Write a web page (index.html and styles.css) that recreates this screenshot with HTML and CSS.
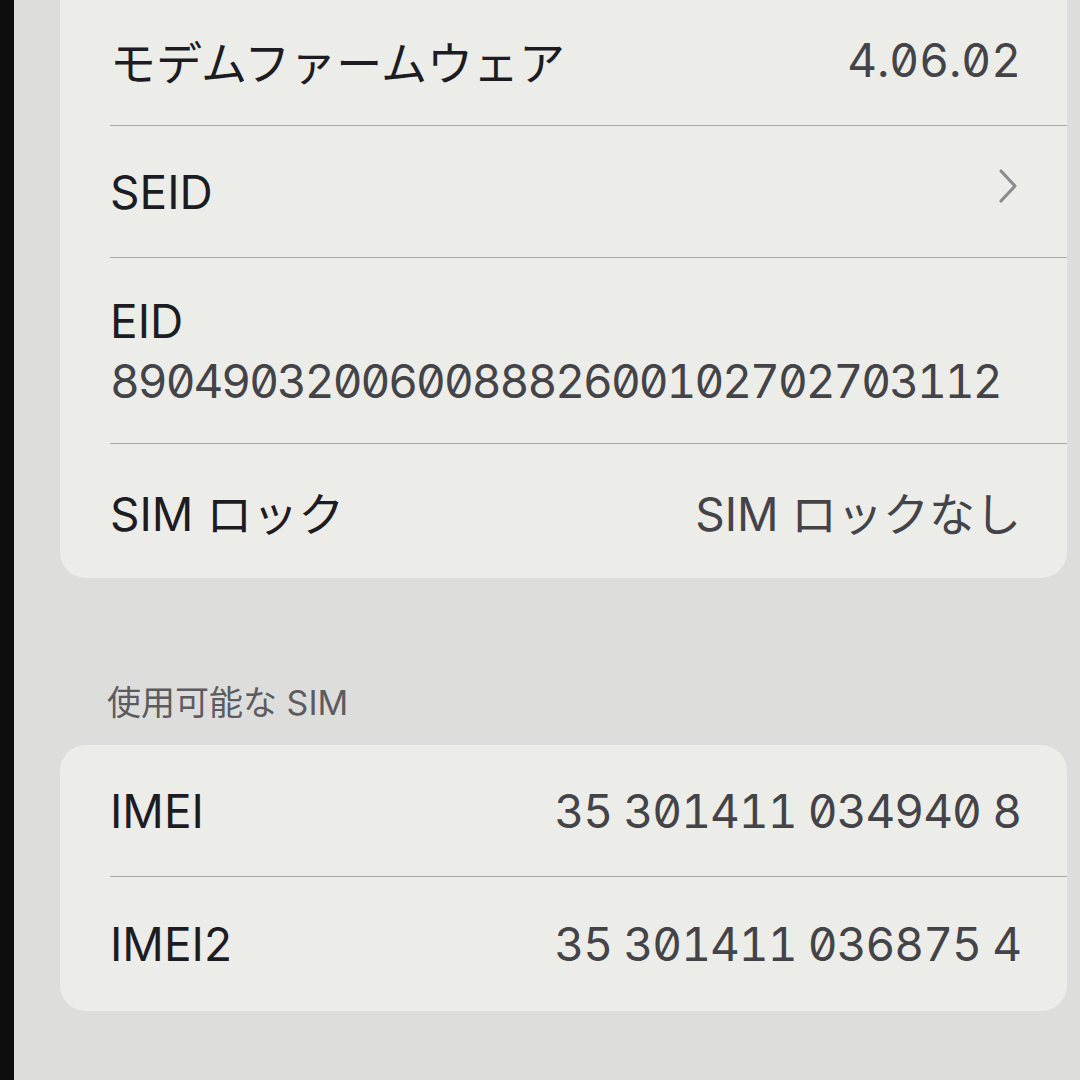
FILE: index.html
```html
<!DOCTYPE html>
<html lang="ja">
<head>
  <meta charset="UTF-8">
  <link rel="stylesheet" href="styles.css">
</head>
<body>

<div class="bezel"></div>

<div class="screen">

  <!-- キャリア情報 -->
  <div class="card card-cut">
    <div class="row">
      <span class="label">モデムファームウェア</span>
      <span class="value">4.06.02</span>
    </div>
    <div class="row">
      <span class="label">SEID</span>
      <svg class="chevron" width="22" height="36" viewBox="0 0 22 36">
        <path d="M4 3 L18 18 L4 33" fill="none" stroke="currentColor" stroke-width="3.2" stroke-linecap="round" stroke-linejoin="round"/>
      </svg>
    </div>
    <div class="row row-stack">
      <span class="label">EID</span>
      <span class="value eid">89049032006008882600102702703112</span>
    </div>
    <div class="row">
      <span class="label">SIM ロック</span>
      <span class="value">SIM ロックなし</span>
    </div>
  </div>

  <div class="section-title">使用可能な SIM</div>

  <div class="card">
    <div class="row">
      <span class="label">IMEI</span>
      <span class="value imei">35 301411 034940 8</span>
    </div>
    <div class="row">
      <span class="label">IMEI2</span>
      <span class="value imei">35 301411 036875 4</span>
    </div>
  </div>

</div>

</body>
</html>
```

FILE: styles.css
```css
body {
  margin: 0;
  height: 1080px;
  overflow: hidden;
  display: flex;
  background-color: #dddedc;
  font-family: Inter, "Noto Sans CJK JP", sans-serif;
}

.bezel {
  flex-shrink: 0;
  width: 14px;
  background-color: #0e0e0e;
}

.screen {
  flex: 1;
  min-width: 0;
  padding: 0 13px 0 46px;
}

.card {
  background-color: #ecece9;
  border-radius: 26px;
  overflow: hidden;
}

/* 上のカードは画面外から続いている */
.card-cut {
  margin-top: -6px;
  border-top-left-radius: 0;
  border-top-right-radius: 0;
}

.row {
  display: flex;
  justify-content: space-between;
  align-items: center;
  box-sizing: border-box;
  height: 132px;
  margin-left: 50px;
  padding-right: 46px;
  border-bottom: 1px solid #a9a9a7;
}
.row:last-child {
  border-bottom: none;
  height: 134px;
}

.row-stack {
  height: 186px;
  flex-direction: column;
  justify-content: center;
  align-items: flex-start;
}
.row-stack .label,
.row-stack .value {
  line-height: 60px;
}

.label {
  font-size: 46px;
  color: #1c1c22;
}

.value {
  font-size: 46px;
  color: #444448;
  font-variant-numeric: tabular-nums slashed-zero;
}
.eid {
  letter-spacing: -2px;
}
.imei {
  letter-spacing: -1px;
}

.chevron {
  color: #8c8c8c;
  margin-right: 2px;
  margin-top: -12px;
}

.section-title {
  padding: 105px 0 22px 47px;
  font-size: 34px;
  line-height: 40px;
  color: #5c5c60;
}
```
